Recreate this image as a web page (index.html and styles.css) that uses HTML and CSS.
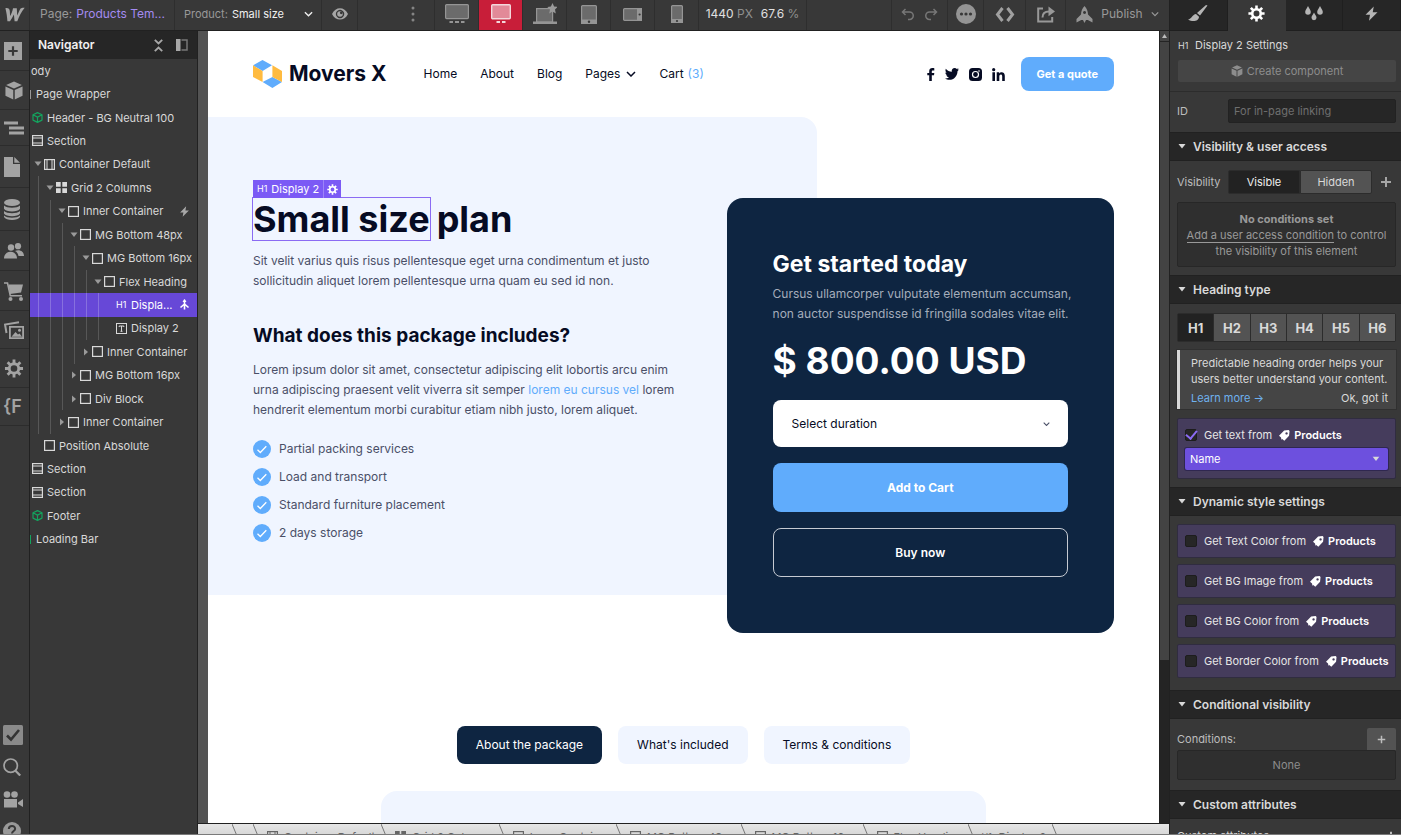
FILE: index.html
```html
<!DOCTYPE html>
<html lang="en">
<head>
<meta charset="utf-8">
<title>Movers X – Designer</title>
<link rel="stylesheet" href="styles.css">
</head>
<body>
<svg class="sprite" aria-hidden="true">
  <symbol id="box" viewBox="0 0 11 11"><rect x=".6" y=".6" width="9.8" height="9.8" fill="none" stroke="currentColor" stroke-width="1.2"/></symbol>
  <symbol id="container" viewBox="0 0 11 11"><rect x=".6" y=".6" width="9.8" height="9.8" fill="none" stroke="currentColor" stroke-width="1.2"/><path d="M3 1v9M8 1v9" stroke="currentColor"/></symbol>
  <symbol id="section" viewBox="0 0 11 11"><rect x=".6" y=".6" width="9.8" height="9.8" fill="none" stroke="currentColor" stroke-width="1.2"/><path d="M1 3h9M1 8h9" stroke="currentColor"/></symbol>
  <symbol id="grid" viewBox="0 0 11 11"><path d="M0 0h4.7v4.7H0zM6.3 0H11v4.7H6.3zM0 6.3h4.7V11H0zM6.3 6.3H11V11H6.3z" fill="currentColor"/></symbol>
  <symbol id="textbox" viewBox="0 0 11 11"><rect x=".5" y=".5" width="10" height="10" fill="none" stroke="currentColor"/><path d="M3.2 4V3h4.6v1M5.5 3v5.4M4.5 8.3h2" fill="none" stroke="currentColor"/></symbol>
  <symbol id="cubeline" viewBox="0 0 11 11"><path d="M5.5.6l4.5 2.2v5.3L5.5 10.4 1 8.100V2.800zM1 2.800l4.500 2.300L10 2.800M5.500 5.100v5.300" fill="none" stroke="currentColor" stroke-width="1.2" stroke-linejoin="round"/></symbol>
  <symbol id="cube" viewBox="0 0 20 20"><path d="M10 .5l8.300 3.600L10 8 1.700 4.100zM1 5.700l8.200 3.800V19.500L1 15.500zM19 5.700l-8.200 3.800V19.500l8.200-4z" fill="currentColor"/></symbol>
  <symbol id="bolt" viewBox="0 0 12 12"><path d="M7.800.3L1.200 7h3.600l-.8 4.700L10.800 5H7z" fill="currentColor"/></symbol>
  <symbol id="gear" viewBox="0 0 20 20"><path fill="none" stroke="currentColor" stroke-width="3" stroke-linecap="butt" d="M10 .5V5M10 15v4.500M.5 10H5M15 10h4.500M3.300 3.300l3.200 3.200M13.500 13.500l3.200 3.200M16.700 3.300l-3.200 3.200M6.500 13.500l-3.200 3.200"/><circle cx="10" cy="10" r="5" fill="none" stroke="currentColor" stroke-width="3"/></symbol>
  <symbol id="tag" viewBox="0 0 12 12"><path fill="currentColor" fill-rule="evenodd" d="M5.600.6L10.500 0 11.500 1 11 6.300 5.800 11.700 3.500 9.700 2.700 10.500 2.200 8.300 0 6.300zM8.200 2.400a1.300 1.300 0 1 0 .1 0z"/></symbol>
  <symbol id="chev" viewBox="0 0 10 6"><path d="M1 1l4 4 4-4" fill="none" stroke="currentColor" stroke-width="1.500"/></symbol>
  <symbol id="down" viewBox="0 0 8 5"><path d="M.5 0h7L4 4.500z" fill="currentColor"/></symbol>
  <symbol id="right" viewBox="0 0 8 8"><path d="M2 .5v7L6 4z" fill="currentColor"/></symbol>
  <symbol id="plus" viewBox="0 0 12 12"><path d="M6 1v10M1 6h10" stroke="currentColor" stroke-width="2"/></symbol>
  <symbol id="tick" viewBox="0 0 18 18"><circle cx="9" cy="9" r="9" fill="#60acfc"/><path d="M4.500 9.800l2.800 2.700L13.300 6.300" fill="none" stroke="#fff" stroke-width="1.300"/></symbol>
  <symbol id="edge" viewBox="0 0 10 24"><path d="M0 0l10 24" stroke="#777" fill="none"/></symbol>
</svg>

<div class="app">
  <div class="editor">
    <header class="topbar">
      <button class="tb-cell tb-logo" aria-label="Home"><svg width="20" height="15" viewBox="0 0 20 15"><path fill="#a6a6a6" d="M.4 1.200C3.300.8 4.600 1.800 4.800 4L5.100 9C6.500 6.500 7.600 3.800 8 1.200H11.800L12.200 8.600C13.500 6 14.600 2.800 15.600 1.600 16.600.7 18 .7 19.700.8 16.500 4.600 14.200 9.200 12.300 14.200H9.600L8.900 7.500C7.700 9.800 6.400 12.200 5 14.200H2.400C2.200 10 1.500 5.600.4 1.200z"/></svg></button>
      <div class="tb-cell tb-page"><span class="dim">Page:</span><a href="#" class="violet">Products Tem...</a></div>
      <div class="tb-cell tb-product"><label class="dim" for="product">Product:</label><span class="pick"><select id="product"><option>Small size</option></select><svg class="pick-arrow" width="9" height="6"><use href="#chev"/></svg></span></div>
      <button class="tb-cell tb-eye" aria-label="Preview"><svg width="16" height="12" viewBox="0 0 16 12"><path fill="#a6a6a6" fill-rule="evenodd" d="M0 6C3.500-1.600 12.500-1.600 16 6 12.500 13.400 3.500 13.400 0 6zM8 1.800a4.200 4.200 0 1 0 .1 0z"/><circle cx="8" cy="6" r="2.800" fill="#a6a6a6"/><circle cx="9.300" cy="4.800" r="1.400" fill="#383838"/></svg></button>
      <div class="tb-cell tb-more"><svg width="4" height="16" viewBox="0 0 4 16" fill="#858585"><circle cx="2" cy="2" r="1.500"/><circle cx="2" cy="8" r="1.500"/><circle cx="2" cy="14" r="1.500"/></svg></div>
      <button class="tb-cell device" aria-label="Large desktop"><svg width="24" height="20" viewBox="0 0 24 20"><rect x=".6" y=".6" width="22.800" height="14" rx="1" fill="#6b6b6b" stroke="#959595" stroke-width="1.200"/><path d="M4.500 18h3.500M10 18h4M16 18h3.500" stroke="#959595" stroke-width="2"/></svg></button>
      <button class="tb-cell device on" aria-label="Desktop"><svg width="20" height="20" viewBox="0 0 20 20"><rect x=".7" y=".7" width="18.600" height="14" rx="1" fill="#e28a98" stroke="#f3d7db" stroke-width="1.400"/><path d="M5.500 18H9M11 18h3.500" stroke="#f3d7db" stroke-width="2"/></svg></button>
      <button class="tb-cell device" aria-label="Base breakpoint"><svg width="24" height="22" viewBox="0 0 24 22"><rect x="3.600" y="5.600" width="16" height="13.500" fill="#6b6b6b" stroke="#959595" stroke-width="1.200"/><path d="M0 18.500h24v2.500H0z" fill="#959595"/><path d="M19.500 0l1.600 3.600 3.600.3-2.700 2.600.8 3.900-3.300-2-3.300 2 .8-3.900L14.300 3.900l3.600-.3z" fill="#9a9a9a"/></svg></button>
      <button class="tb-cell device" aria-label="Tablet"><svg width="16" height="19" viewBox="0 0 16 19"><rect x=".6" y=".6" width="14.800" height="17.800" rx="1" fill="#6b6b6b" stroke="#959595" stroke-width="1.200"/><path d="M0 14.500h16V19H0z" fill="#959595"/><circle cx="8" cy="16.700" r="1.200" fill="#383838"/></svg></button>
      <button class="tb-cell device" aria-label="Mobile landscape"><svg width="19" height="13" viewBox="0 0 19 13"><rect x=".6" y=".6" width="17.800" height="11.800" rx="1" fill="#6b6b6b" stroke="#959595" stroke-width="1.200"/><path d="M14 0h5v13h-5z" fill="#959595"/><circle cx="16.600" cy="6.500" r="1.100" fill="#383838"/></svg></button>
      <button class="tb-cell device" aria-label="Mobile portrait"><svg width="12" height="18" viewBox="0 0 12 18"><rect x=".6" y=".6" width="10.800" height="16.800" rx="1" fill="#6b6b6b" stroke="#959595" stroke-width="1.200"/><path d="M0 14h12v4H0z" fill="#959595"/><circle cx="6" cy="16" r="1.100" fill="#383838"/></svg></button>
      <div class="tb-cell tb-size"><span>1440 <i>PX</i></span><span>67.6 <i>%</i></span></div>
      <div class="tb-cell tb-gap"></div>
      <div class="tb-cell tb-history">
        <button aria-label="Undo"><svg width="13" height="13" viewBox="0 0 13 13"><path d="M4.500 1L1.500 4l3 3M2 4h6.500a3.600 3.600 0 0 1 0 7.500H7" fill="none" stroke="#777" stroke-width="1.500"/></svg></button>
        <button aria-label="Redo"><svg width="13" height="13" viewBox="0 0 13 13"><path d="M8.500 1l3 3-3 3M11 4H4.500a3.600 3.600 0 0 0 0 7.500H6" fill="none" stroke="#777" stroke-width="1.500"/></svg></button>
      </div>
      <button class="tb-cell tb-status" aria-label="Status"><svg width="20" height="20" viewBox="0 0 20 20"><circle cx="10" cy="10" r="10" fill="#949494"/><g fill="#383838"><circle cx="5.500" cy="10" r="1.600"/><circle cx="10" cy="10" r="1.600"/><circle cx="14.500" cy="10" r="1.600"/></g></svg></button>
      <button class="tb-cell tb-code" aria-label="Export code"><svg width="20" height="15" viewBox="0 0 20 15"><path d="M7.500 1L2.500 7.500l5 6.500M12.500 1l5 6.500-5 6.500" fill="none" stroke="#a0a0a0" stroke-width="3"/></svg></button>
      <button class="tb-cell tb-share" aria-label="Share"><svg width="18" height="18" viewBox="0 0 18 18"><path d="M6 3.500H1.200v13h14V12M5.500 12.500C5.500 8 8 6.500 12 6.500" fill="none" stroke="#989898" stroke-width="2"/><path d="M11.500 1.500L18 6.500l-6.500 4.800z" fill="#989898"/></svg></button>
      <button class="tb-cell tb-publish"><svg width="17" height="17" viewBox="0 0 17 17"><path fill="#949494" fill-rule="evenodd" d="M8.500 0C11 2.500 11.800 5 12 8.500l4.500 4.500v3.500l-4.700-2.500H10L8.500 17 7 14H5.200L.5 16.500V13L5 8.500C5.200 5 6 2.500 8.500 0zM8.500 5a1.500 1.500 0 1 0 .1 0z"/></svg><span>Publish</span><svg width="8" height="6"><use href="#chev"/></svg></button>
    </header>

    <div class="workspace">
      <nav class="rail" aria-label="Tools">
        <button aria-label="Add"><svg width="18" height="20" viewBox="0 0 18 20"><path fill="#a3a3a3" fill-rule="evenodd" d="M0 1h18v18H0zM7.900 5.300v3.600H4.300v2.200h3.600v3.600h2.200v-3.600h3.600V8.900h-3.600V5.300z"/></svg></button>
        <button aria-label="Components"><svg width="20" height="19"><use href="#cube"/></svg></button>
        <button aria-label="Navigator"><svg width="20" height="16" viewBox="0 0 20 16"><path d="M0 3h14M5 8h15M5 13h15" stroke="#a3a3a3" stroke-width="3"/></svg></button>
        <button aria-label="Pages"><svg width="16" height="22" viewBox="0 0 16 22"><path fill="#a3a3a3" d="M0 1h9v7h7v13H0zM10.300 1L16 6.700h-5.700z"/></svg></button>
        <button aria-label="CMS"><svg width="16" height="23" viewBox="0 0 16 23"><g fill="#a3a3a3"><ellipse cx="8" cy="4.500" rx="8" ry="3.600"/><path d="M0 7.500c3 3 13 3 16 0v3.200c-2 3.700-14 3.700-16 0zM0 13c3 3 13 3 16 0v2.500c-2 3.700-14 3.700-16 0zM0 17.600c3 3 13 3 16 0v1.500c-2 4-14 4-16 0z"/></g></svg></button>
        <button aria-label="Users"><svg width="20" height="20" viewBox="0 0 20 20"><g fill="#a3a3a3"><circle cx="7" cy="6.500" r="3.200"/><circle cx="14" cy="5.200" r="3.100"/><path d="M0 17.500c0-9 13-9 13 0zM11 10c4-2 9 0 9 5h-5.500C14 12.500 13 11 11 10z"/></g></svg></button>
        <button aria-label="Ecommerce"><svg width="20" height="20" viewBox="0 0 20 20"><path d="M0 2h3.500l2.800 12.800H18" fill="none" stroke="#a3a3a3" stroke-width="1.600"/><path d="M4.500 3.500H19L17 11.500 6 13z" fill="#a3a3a3"/><circle cx="6.500" cy="18" r="2" fill="#a3a3a3"/><circle cx="17" cy="18" r="2" fill="#a3a3a3"/></svg></button>
        <button aria-label="Assets"><svg width="20" height="18" viewBox="0 0 20 18"><path d="M2.500 12L1 3.500 15 1.200" fill="none" stroke="#a3a3a3" stroke-width="2"/><path fill="#a3a3a3" fill-rule="evenodd" d="M5 5H20V18H5zM6.800 6.800v9.400h11.400V6.800z"/><path d="M7.500 15.800l4-4.800 2.500 2.500 1.500-1 2.500 3.300z" fill="#a3a3a3"/><circle cx="15.500" cy="9.300" r="1.500" fill="#a3a3a3"/></svg></button>
        <button aria-label="Settings"><svg width="20" height="19"><use href="#gear"/></svg></button>
        <button class="finsweet" aria-label="Finsweet">{F</button>
        <div class="rail-end">
          <button aria-label="Audit"><svg width="20" height="20" viewBox="0 0 20 20"><rect width="20" height="20" rx="1.500" fill="#8a8a8a"/><path d="M4 10.500l4 4L16 5" fill="none" stroke="#333" stroke-width="2.600"/></svg></button>
          <button aria-label="Search"><svg width="18" height="18" viewBox="0 0 18 18"><circle cx="7.700" cy="7.700" r="6.700" fill="none" stroke="#a3a3a3" stroke-width="1.700"/><path d="M12.200 12.500l5 5" stroke="#a3a3a3" stroke-width="2.200"/></svg></button>
          <button aria-label="Videos"><svg width="20" height="17" viewBox="0 0 20 17"><g fill="#a3a3a3"><circle cx="4" cy="3.500" r="3.300"/><circle cx="11.500" cy="3.500" r="3.300"/><path d="M1 8h13v8.500H1zM15 11.500l5-3.500v8l-5-3z"/></g></svg></button>
          <button aria-label="Help"><svg width="18" height="18" viewBox="0 0 18 18"><circle cx="9" cy="9" r="9" fill="#999"/><path d="M5.800 7c.2-4 6.500-3.800 6.300 0C12 9 9 9 9 11.500M9 13v2" fill="none" stroke="#383838" stroke-width="2"/></svg></button>
        </div>
      </nav>

      <aside class="navigator">
        <div class="nav-head"><h2>Navigator</h2>
          <button aria-label="Collapse all"><svg width="9" height="13" viewBox="0 0 9 13"><path d="M.8.8L4.500 4.500 8.200.8M.8 12.200l3.700-3.700 3.700 3.700" fill="none" stroke="#a8a8a8" stroke-width="1.800"/></svg></button>
          <button aria-label="Dock"><svg width="12" height="12" viewBox="0 0 12 12"><path d="M0 0h4.500v12H0z" fill="#a8a8a8"/><path d="M5.500 1H11v10H5.500" fill="none" stroke="#777" stroke-width="1.500"/></svg></button>
        </div>
        <ul class="tree">
          <li class="root">ody</li>
          <li class="wrapper"><i class="sliver"></i>Page Wrapper</li>
          <li class="green"><svg class="ic"><use href="#cubeline"/></svg><span>Header - BG Neutral 100</span></li>
          <li><svg class="ic"><use href="#section"/></svg><span>Section</span></li>
          <li class="d1"><svg class="tw"><use href="#down"/></svg><svg class="ic"><use href="#container"/></svg><span>Container Default</span></li>
          <li class="d2"><svg class="tw"><use href="#down"/></svg><svg class="ic"><use href="#grid"/></svg><span>Grid 2 Columns</span></li>
          <li class="d3"><svg class="tw"><use href="#down"/></svg><svg class="ic"><use href="#box"/></svg><span>Inner Container</span><svg class="end"><use href="#bolt"/></svg></li>
          <li class="d4"><svg class="tw"><use href="#down"/></svg><svg class="ic"><use href="#box"/></svg><span>MG Bottom 48px</span></li>
          <li class="d5"><svg class="tw"><use href="#down"/></svg><svg class="ic"><use href="#box"/></svg><span>MG Bottom 16px</span></li>
          <li class="d6"><svg class="tw"><use href="#down"/></svg><svg class="ic"><use href="#box"/></svg><span>Flex Heading</span></li>
          <li class="d7 selected"><b class="ic h1tag">H1</b><span>Displa...</span><svg class="end" viewBox="0 0 11 11"><path d="M5.500 .8v9.700M5.500 5L1.500 8.500M5.500 5l4 3.500" fill="none" stroke="currentColor" stroke-width="1.600"/><path d="M5.500 0l2 3h-4z" fill="currentColor"/></svg></li>
          <li class="d7"><svg class="ic"><use href="#textbox"/></svg><span>Display 2</span></li>
          <li class="d5"><svg class="tw"><use href="#right"/></svg><svg class="ic"><use href="#box"/></svg><span>Inner Container</span></li>
          <li class="d4"><svg class="tw"><use href="#right"/></svg><svg class="ic"><use href="#box"/></svg><span>MG Bottom 16px</span></li>
          <li class="d4"><svg class="tw"><use href="#right"/></svg><svg class="ic"><use href="#box"/></svg><span>Div Block</span></li>
          <li class="d3"><svg class="tw"><use href="#right"/></svg><svg class="ic"><use href="#box"/></svg><span>Inner Container</span></li>
          <li class="d1 bare"><svg class="ic"><use href="#box"/></svg><span>Position Absolute</span></li>
          <li><svg class="ic"><use href="#section"/></svg><span>Section</span></li>
          <li><svg class="ic"><use href="#section"/></svg><span>Section</span></li>
          <li class="green"><svg class="ic"><use href="#cubeline"/></svg><span>Footer</span></li>
          <li class="wrapper"><i class="sliver sliver-green"></i>Loading Bar</li>
        </ul>
      </aside>

      <div class="stage">
        <div class="viewport">
          <main class="site">
            <header class="site-head">
              <a class="brand" href="#"><svg width="29" height="28" viewBox="0 0 29 28"><path fill="#60acfc" d="M9.500 0L19 5.300 9.600 11 0 5.300zM19.400 17L29 22l-9.600 6-9.800-6z"/><path fill="#ffbb40" d="M0 5.300L9.600 11v11L0 17zM19.400 5.300L29 11v11l-9.600-5z"/></svg>Movers X</a>
              <nav class="menu"><a href="#">Home</a><a href="#">About</a><a href="#">Blog</a><a href="#">Pages <svg width="10" height="6"><use href="#chev"/></svg></a><a href="#">Cart <em>(3)</em></a></nav>
              <div class="social">
                <a href="#" aria-label="Facebook"><svg width="8" height="13" viewBox="0 0 8 13"><path fill="#060b23" d="M2.200 13V7.300H.3V4.900h1.900V3.200C2.200 1 3.500 0 5.300 0c.9 0 1.600.1 2 .2v2.200H6C5 2.400 4.800 2.900 4.800 3.500v1.400h2.500L7 7.300H4.800V13z"/></svg></a>
                <a href="#" aria-label="Twitter"><svg width="14" height="12" viewBox="0 0 14 12"><path fill="#060b23" d="M14 1.500l-1.500 1.700C12.500 8 9 11.800 4.500 11.800 2.800 11.800 1.200 11.300 0 10.500c1.500.1 2.800-.3 4-1.200C2.800 9.300 1.700 8.500 1.300 7.300h1.200C1.300 7 .3 5.800.4 4.400L1.700 4.800C.5 3.900.1 2.300.8.800 2.300 2.600 4.500 3.700 6.800 3.800 6.300 1.600 7.900 0 9.700 0c.8 0 1.600.4 2.100.9L13.600.2 12.500 1.800z"/></svg></a>
                <a href="#" aria-label="Instagram"><svg width="13" height="13" viewBox="0 0 13 13"><rect width="13" height="13" rx="3.500" fill="#060b23"/><circle cx="6.500" cy="6.500" r="3" fill="none" stroke="#fff" stroke-width="1.200"/><circle cx="10" cy="3" r=".8" fill="#fff"/></svg></a>
                <a href="#" aria-label="LinkedIn"><svg width="13" height="13" viewBox="0 0 13 13"><g fill="#060b23"><circle cx="1.700" cy="1.700" r="1.600"/><path d="M.4 4.300H3V13H.4zM4.700 4.300h2.500v1.200C8.600 3.300 12.800 3.600 12.800 7.800V13h-2.600V8.500c0-2.800-2.900-2.500-2.900 0V13H4.700z"/></g></svg></a>
              </div>
              <a class="quote" href="#">Get a quote</a>
            </header>

            <section class="hero">
              <div class="plan">
                <div class="title-row">
                  <h1 class="picked">Small size<span class="badge"><b>H1</b><span>Display 2</span><svg width="11" height="11"><use href="#gear"/></svg></span></h1>
                  <div class="title">plan</div>
                </div>
                <p class="lead">Sit velit varius quis risus pellentesque eget urna condimentum et justo<br>sollicitudin aliquet lorem pellentesque urna quam eu sed id non.</p>
                <h2>What does this package includes?</h2>
                <p>Lorem ipsum dolor sit amet, consectetur adipiscing elit lobortis arcu enim<br>urna adipiscing praesent velit viverra sit semper <a href="#">lorem eu cursus vel</a> lorem<br>hendrerit elementum morbi curabitur etiam nibh justo, lorem aliquet.</p>
                <ul class="features">
                  <li><svg width="18" height="18"><use href="#tick"/></svg>Partial packing services</li>
                  <li><svg width="18" height="18"><use href="#tick"/></svg>Load and transport</li>
                  <li><svg width="18" height="18"><use href="#tick"/></svg>Standard furniture placement</li>
                  <li><svg width="18" height="18"><use href="#tick"/></svg>2 days storage</li>
                </ul>
              </div>
              <form class="order">
                <h3>Get started today</h3>
                <p>Cursus ullamcorper vulputate elementum accumsan,<br>non auctor suspendisse id fringilla sodales vitae elit.</p>
                <div class="price">$ 800.00 USD</div>
                <span class="pick"><select aria-label="Duration"><option>Select duration</option></select><svg class="pick-arrow" width="7" height="5"><use href="#chev"/></svg></span>
                <button type="button" class="cart">Add to Cart</button>
                <button type="button" class="buy">Buy now</button>
              </form>
            </section>

            <div class="tabs"><button class="on">About the package</button><button>What's included</button><button>Terms &amp; conditions</button></div>
            <section class="panel"></section>
          </main>
          <div class="scroll"><div class="scroll-up"><svg width="5" height="4" viewBox="0 0 5 4"><path d="M0 4L2.500 0 5 4z" fill="#bbb"/></svg></div><div class="thumb"></div></div>
        </div>
        <div class="crumbs">
          <span class="crumb first"><svg class="edge"><use href="#edge"/></svg></span>
          <span class="crumb second"><svg class="edge"><use href="#edge"/></svg></span>
          <span class="crumb"><svg class="ic"><use href="#container"/></svg>Container Default<svg class="edge"><use href="#edge"/></svg></span>
          <span class="crumb"><svg class="ic"><use href="#grid"/></svg>Grid 2 Columns<svg class="edge"><use href="#edge"/></svg></span>
          <span class="crumb"><svg class="ic"><use href="#box"/></svg>Inner Container<svg class="edge"><use href="#edge"/></svg></span>
          <span class="crumb"><svg class="ic"><use href="#box"/></svg>MG Bottom 48px<svg class="edge"><use href="#edge"/></svg></span>
          <span class="crumb"><svg class="ic"><use href="#box"/></svg>MG Bottom 16px<svg class="edge"><use href="#edge"/></svg></span>
          <span class="crumb"><svg class="ic"><use href="#box"/></svg>Flex Heading<svg class="edge"><use href="#edge"/></svg></span>
          <span class="crumb"><b class="ic h1tag">H1</b>Display 2<svg class="edge"><use href="#edge"/></svg></span>
        </div>
      </div>
    </div>
  </div>

  <aside class="inspector">
    <div class="modes">
      <button aria-label="Style"><svg width="20" height="18" viewBox="0 0 20 18"><path fill="#b5b5b5" d="M19.500.5L12 10.500 9 8 18 0zM8 9l3 2.700C11 16 5 17.500 0 14.500 3.500 14 4.500 9.500 8 9z"/></svg></button>
      <button class="on" aria-label="Settings"><svg width="17" height="17"><use href="#gear"/></svg></button>
      <button aria-label="Interactions"><svg width="18" height="15" viewBox="0 0 18 15"><path fill="#b5b5b5" d="M3 0c1.500 3 2.800 4.200 2.800 6a2.800 2.800 0 0 1-5.600 0C.2 4.200 1.500 3 3 0zM15 0c1.500 3 2.800 4.200 2.800 6a2.800 2.800 0 0 1-5.600 0c0-1.800 1.300-3 2.800-6zM9 6.500c1.300 2.500 2.500 3.600 2.500 5.200a2.500 2.500 0 0 1-5 0C6.500 10.100 7.700 9 9 6.500z"/></svg></button>
      <button aria-label="Effects"><svg width="15" height="15"><use href="#bolt"/></svg></button>
    </div>
    <div class="ins-head">
      <div class="ins-title"><b>H1</b>Display 2 Settings</div>
      <button class="create"><svg width="12" height="12"><use href="#cube"/></svg>Create component</button>
    </div>
    <div class="row id-row"><label for="el-id">ID</label><input id="el-id" type="text" placeholder="For in-page linking"></div>

    <h3 class="bar"><svg><use href="#down"/></svg>Visibility &amp; user access</h3>
    <div class="block">
      <div class="row"><span class="lbl">Visibility</span><div class="seg"><button class="on">Visible</button><button>Hidden</button></div><button class="add" aria-label="Add condition"><svg width="12" height="12"><use href="#plus"/></svg></button></div>
      <p class="note"><b>No conditions set</b><br><a href="#">Add a user access condition</a> to control<br>the visibility of this element</p>
    </div>

    <h3 class="bar"><svg><use href="#down"/></svg>Heading type</h3>
    <div class="block">
      <div class="levels"><button class="on">H1</button><button>H2</button><button>H3</button><button>H4</button><button>H5</button><button>H6</button></div>
      <div class="callout"><p>Predictable heading order helps your users better understand your content.</p><div><a href="#">Learn more →</a><button>Ok, got it</button></div></div>
      <div class="bind bind-open"><label><input type="checkbox" checked>Get text from<svg width="11" height="11"><use href="#tag"/></svg><b>Products</b></label>
        <span class="pick"><select aria-label="Field"><option>Name</option></select><svg class="pick-arrow" width="8" height="5"><use href="#down"/></svg></span></div>
    </div>

    <h3 class="bar"><svg><use href="#down"/></svg>Dynamic style settings</h3>
    <div class="block binds">
      <div class="bind"><label><input type="checkbox">Get Text Color from<svg width="11" height="11"><use href="#tag"/></svg><b>Products</b></label></div>
      <div class="bind"><label><input type="checkbox">Get BG Image from<svg width="11" height="11"><use href="#tag"/></svg><b>Products</b></label></div>
      <div class="bind"><label><input type="checkbox">Get BG Color from<svg width="11" height="11"><use href="#tag"/></svg><b>Products</b></label></div>
      <div class="bind"><label><input type="checkbox">Get Border Color from<svg width="11" height="11"><use href="#tag"/></svg><b>Products</b></label></div>
    </div>

    <h3 class="bar"><svg><use href="#down"/></svg>Conditional visibility</h3>
    <div class="block conditions">
      <div class="cond-row"><span>Conditions:</span><button aria-label="Add"><svg width="9" height="9"><use href="#plus"/></svg></button></div>
      <div class="none">None</div>
    </div>

    <h3 class="bar"><svg><use href="#down"/></svg>Custom attributes</h3>
    <div class="block custom"><span>Custom attributes</span><svg width="10" height="10"><use href="#plus"/></svg></div>
  </aside>
</div>
</body>
</html>
```
FILE: styles.css
```css
* { box-sizing: border-box; }
body, h1, h2, h3, p, ul { margin: 0; padding: 0; }
ul { list-style: none; }
button, input, select { font: inherit; color: inherit; margin: 0; }
button { background: none; border: 0; padding: 0; cursor: pointer; }
a { color: inherit; text-decoration: none; }
svg { flex: none; display: block; }
i, em { font-style: normal; }
.sprite { position: absolute; width: 0; height: 0; }

body {
  height: 100vh;
  overflow: hidden;
  background: #383838;
  color: #d9d9d9;
  font: 11px/16px Inter, "Liberation Sans", sans-serif;
}
.app { display: flex; height: 100%; border-bottom: 1px solid #7a7a7a; }
.editor { flex: 1; min-width: 0; display: flex; flex-direction: column; }

.pick { position: relative; display: block; }
.pick select { appearance: none; width: 100%; border: 0; background: none; outline: 0; }
.pick-arrow { position: absolute; right: 8px; top: 50%; transform: translateY(-50%); pointer-events: none; }

/* Top bar */
.topbar { display: flex; height: 31px; border-bottom: 1px solid #212121; background: #383838; }
.tb-cell { display: flex; align-items: center; justify-content: center; border-right: 1px solid #2e2e2e; padding-bottom: 2px; }
.dim { color: #999; }
.violet { color: #a48bf0; }
.tb-logo { width: 30px; }
.tb-page { width: 145px; gap: 4px; justify-content: flex-start; padding-left: 10px; font-size: 12px; white-space: nowrap; }
.tb-product { width: 147px; gap: 4px; justify-content: flex-start; padding-left: 9px; }
.tb-product .pick { flex: 1; color: #f0f0f0; }
.tb-product select { padding: 0; }
.tb-eye { width: 36px; }
.tb-more { width: 77px; padding-left: 34px; }
.device { width: 44px; }
.device.on { background: #c81e39; }
.tb-size { width: 108px; gap: 8px; font-size: 12px; color: #e0e0e0; }
.tb-size i { color: #8f8f8f; }
.tb-gap { flex: 1; }
.tb-history { width: 56px; gap: 11px; }
.tb-status { width: 36px; }
.tb-code { width: 42px; }
.tb-share { width: 40px; }
.tb-publish { width: 103px; gap: 8px; color: #999; border-right: 0; font-size: 12px; }

.workspace { flex: 1; min-height: 0; display: flex; }

/* Tool rail */
.rail { width: 30px; display: flex; flex-direction: column; overflow: hidden; border-right: 1px solid #212121; color: #a3a3a3; }
.rail > button { padding: 10px 0 9px 4px; border-bottom: 1px solid #2c2c2c; }
.rail > .finsweet { font-size: 18px; line-height: 18px; font-weight: 600; text-align: left; padding-left: 3px; }
.rail-end { margin-top: auto; margin-bottom: -13px; display: flex; flex-direction: column; }
.rail-end button { height: 32px; padding-left: 3px; }

/* Navigator */
.navigator { width: 168px; border-right: 1px solid #212121; background: #383838; overflow: hidden; }
.nav-head { display: flex; align-items: center; gap: 13px; height: 28px; padding: 0 9px 0 8px; background: #262626; }
.nav-head h2 { flex: 1; font-size: 12px; font-weight: 600; color: #f0f0f0; }
.tree { display: grid; grid-auto-rows: 1fr; height: 492px; }
.tree li { --d: 0; position: relative; display: flex; align-items: center; white-space: nowrap; padding-left: calc(2px + var(--d) * 12px); }
.tree li::before {
  content: ""; position: absolute; left: 8px; top: 0; bottom: 0;
  width: calc((var(--d) - 1) * 12px);
  background: repeating-linear-gradient(90deg, #575757 0 1px, transparent 1px 12px);
}
.tree .d1 { --d: 1; } .tree .d2 { --d: 2; } .tree .d3 { --d: 3; } .tree .d4 { --d: 4; }
.tree .d5 { --d: 5; } .tree .d6 { --d: 6; } .tree .d7 { --d: 7; }
.ic { width: 11px; height: 11px; margin-right: 4px; flex: none; }
.tw { position: absolute; left: calc(-8px + var(--d) * 12px); width: 8px; height: 8px; color: #9a9a9a; }
.end { width: 11px; height: 11px; margin-left: auto; margin-right: 7px; color: #a8a8a8; }
.h1tag { font-size: 9px; line-height: 11px; font-weight: 400; }
.tree .root { padding-left: 1px; }
.tree .wrapper { padding-left: 0; gap: 5px; }
.sliver { width: 1px; height: 9px; background: #999; }
.sliver-green { background: #14a35e; }
.green .ic { color: #14a35e; }
.tree .selected { background: #6748d7; color: #fff; }
.tree .selected::before { background: repeating-linear-gradient(90deg, #8770de 0 1px, transparent 1px 12px); }
.selected .end { color: #fff; }

/* Canvas */
.stage { flex: 1; min-width: 0; display: flex; flex-direction: column; }
.viewport { flex: 1; min-height: 0; display: flex; background: #535353; padding-left: 10px; overflow: hidden; }
.site { flex: 1; min-width: 0; overflow: hidden; background: #fff; color: #4a4f67; font: 12px/20px Metropolis, Inter, "Liberation Sans", sans-serif; }
.scroll { width: 10px; display: flex; flex-direction: column; background: #242424; border-left: 1px solid #212121; }
.scroll-up { display: grid; place-items: center; height: 11px; background: #444; border-bottom: 1px solid #242424; }
.thumb { height: 78%; background: #434343; }

.site-head { display: flex; align-items: center; height: 86px; padding: 0 45px; color: #060b23; }
.brand { display: flex; align-items: center; gap: 7px; font-size: 21px; font-weight: 700; white-space: nowrap; }
.menu { display: flex; gap: 23px; margin-left: 37px; }
.menu a { display: flex; align-items: center; gap: 6px; white-space: nowrap; }
.menu em { color: #60acfc; margin-left: -2px; }
.social { display: flex; align-items: center; gap: 10px; margin-left: auto; }
.quote { margin-left: 16px; padding: 7px 16px; border-radius: 8px; background: #60acfc; color: #fff; font-size: 11px; font-weight: 700; white-space: nowrap; }

.hero { position: relative; display: grid; grid-template-columns: 1fr 45%; padding: 81px 45px 0; }
.hero::before { content: ""; position: absolute; left: 0; top: 0; width: 64%; height: 478px; border-radius: 0 16px 0 0; background: #f0f5ff; }
.plan, .order { position: relative; }
.title-row { display: flex; gap: 7px; color: #060b23; font-size: 36px; line-height: 42px; font-weight: 700; white-space: nowrap; }
.picked { position: relative; font: inherit; outline: 1px solid #8b6bf3; }
.badge { position: absolute; left: 0; bottom: 100%; display: flex; align-items: center; height: 18px; background: #7b5af5; color: #fff; font: 11px/18px Inter, sans-serif; white-space: nowrap; }
.badge b { font-size: 9px; font-weight: 400; padding: 0 4px; }
.badge span { padding-right: 4px; border-right: 1px solid #9d84f8; }
.badge svg { margin: 0 3px; }
.plan .lead { margin-top: 11px; }
.plan h2 { margin: 33px 0 12px; color: #060b23; font-size: 19px; line-height: 24px; font-weight: 700; }
.plan p { white-space: nowrap; }
.plan p a { color: #60acfc; }
.features { margin-top: 15px; }
.features li { display: flex; align-items: center; gap: 8px; height: 28px; }

.order { display: flex; flex-direction: column; padding: 52px 46px 56px; border-radius: 16px; background: #0e2541; color: #fff; }
.order h3 { font-size: 23px; line-height: 28px; font-weight: 700; }
.order p { margin-top: 6px; color: #a5adbb; white-space: nowrap; }
.price { margin: 15px 0 17px; font-size: 37px; line-height: 44px; font-weight: 700; white-space: nowrap; }
.order select { height: 47px; padding: 0 19px; border-radius: 8px; background: #fff; color: #060b23; }
.order .pick-arrow { right: 18px; color: #4a4f67; }
.order button { height: 49px; margin-top: 16px; border-radius: 8px; font-weight: 600; }
.order .cart { background: #60acfc; font-weight: 700; }
.order .buy { border: 1px solid #c5cad2; }

.tabs { display: flex; justify-content: center; gap: 16px; margin-top: 93px; }
.tabs button { padding: 9px 19px; border-radius: 8px; background: #f0f5ff; color: #060b23; }
.tabs .on { background: #0e2541; color: #fff; }
.panel { width: 64%; max-width: 605px; height: 300px; margin: 27px auto 0; border-radius: 16px; background: #f0f5ff; }

/* Breadcrumbs */
.crumbs { display: flex; height: 11px; overflow: hidden; border-top: 1px solid #212121; background: linear-gradient(#e6e6e6, #d8d8d8); color: #666; }
.crumb { position: relative; flex: none; display: flex; align-items: center; height: 25px; padding: 0 6px 0 14px; }
.crumb .ic { margin-right: 6px; }
.edge { position: absolute; right: -10px; top: 0; width: 10px; height: 24px; }
.first { width: 34px; }
.second { width: 21px; padding: 0; }

/* Inspector */
.inspector { width: 232px; flex: none; overflow: hidden; border-left: 1px solid #212121; background: #383838; }
.modes { display: grid; grid-template-columns: repeat(4, 1fr); height: 31px; }
.modes button { display: grid; place-items: center; background: #262626; border: solid #1f1f1f; border-width: 0 1px 1px 0; color: #b5b5b5; padding-bottom: 3px; }
.modes .on { background: #383838; border-color: #383838; color: #fff; }
.ins-head { padding: 6px 5px 9px 8px; border-bottom: 1px solid #2c2c2c; }
.ins-title b { display: inline-block; width: 17px; font-size: 9px; font-weight: 400; }
.create { display: flex; align-items: center; justify-content: center; gap: 4px; width: 100%; height: 22px; margin-top: 6px; background: #454545; border-radius: 2px; color: #8d8d8d; }
.row { display: flex; align-items: center; }
.row label, .lbl { width: 51px; color: #bdbdbd; }
.id-row { padding: 7px 5px 9px 7px; }
.id-row input { flex: 1; min-width: 0; height: 24px; padding: 0 5px; border: 1px solid #222; border-radius: 2px; background: #262626; }
.id-row input::placeholder { color: #6f6f6f; opacity: 1; }
.bar { display: flex; align-items: center; gap: 7px; height: 29px; padding-left: 8px; border: solid #212121; border-width: 1px 0; background: #262626; color: #d9d9d9; font-size: 12px; font-weight: 600; }
.bar svg { width: 8px; height: 5px; }
.block { padding: 9px 5px 8px 7px; }
.seg { display: flex; width: 144px; }
.seg button { flex: 1; height: 24px; border: 1px solid #2c2c2c; background: #535353; border-radius: 0 2px 2px 0; }
.seg .on { background: #222; border-radius: 2px 0 0 2px; color: #eee; }
.add { margin-left: 8px; color: #a5a5a5; }
.note { margin-top: 8px; padding: 8px 0 7px; border: 1px solid #272727; border-radius: 2px; background: #2f2f2f; color: #999; text-align: center; }
.note a { border-bottom: 1px solid #999; }
.levels { display: grid; grid-template-columns: repeat(6, 1fr); gap: 1px; border: 1px solid #2c2c2c; border-radius: 2px; background: #2c2c2c; }
.levels button { height: 27px; background: #535353; font-size: 13px; font-weight: 700; }
.levels .on { background: #222; }
.callout { margin-top: 8px; padding: 5px 8px 3px 11px; border-left: 3px solid #d9d9d9; background: #454545; box-shadow: 0 0 0 1px #303030; }
.callout div { display: flex; justify-content: space-between; margin-top: 3px; }
.callout a { color: #6fb1ee; }
.bind { display: flex; flex-direction: column; justify-content: center; height: 34px; padding: 0 7px; border: 1px solid #302c40; background: #453c5c; border-radius: 2px; }
.bind label { display: flex; align-items: center; color: #e6e6e6; white-space: nowrap; }
.bind label svg { margin: 0 4px 0 7px; color: #fff; }
.bind b { font-weight: 600; color: #fff; }
.bind input { appearance: none; flex: none; width: 12px; height: 12px; margin-right: 7px; border: 1px solid #1d1d1d; border-radius: 2px; background: #262626; }
.bind input:checked { display: grid; place-items: center; }
.bind input:checked::after { content: ""; width: 5px; height: 9px; border: solid #8b6bf3; border-width: 0 2px 2px 0; transform: rotate(40deg); margin-top: -3px; }
.bind-open { height: auto; gap: 5px; margin-top: 9px; padding: 8px 7px; }
.bind-open select { height: 22px; padding: 0 5px; border-radius: 2px; background: #6d50de; color: #fff; box-shadow: 0 0 0 1px #2f2750; }
.binds { display: grid; grid-template-columns: minmax(0, 1fr); gap: 6px; padding-top: 8px; padding-bottom: 12px; }
.conditions { padding-bottom: 10px; }
.cond-row { display: flex; align-items: center; justify-content: space-between; color: #bdbdbd; }
.cond-row button { display: grid; place-items: center; width: 29px; height: 22px; background: #535353; border-radius: 2px 2px 0 0; }
.none { height: 30px; line-height: 28px; border: 1px solid #272727; border-radius: 2px; background: #2f2f2f; color: #8d8d8d; text-align: center; }
.custom { display: flex; justify-content: space-between; align-items: center; }
```
